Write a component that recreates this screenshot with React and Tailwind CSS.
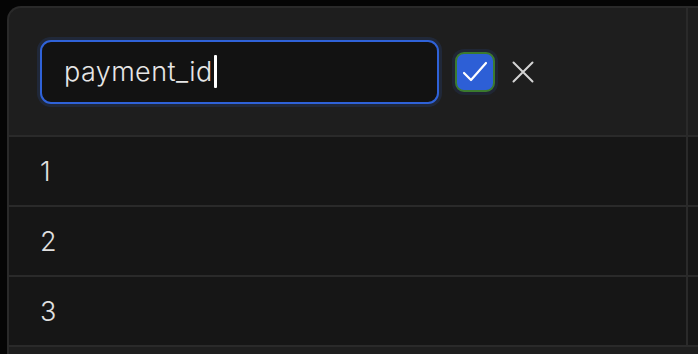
import React from 'react';

const rows = [1, 2, 3];

export default function App() {
  return (
    <div
      className="w-[698px] h-[354px] overflow-hidden bg-[#050505] pt-[6px] pl-[7px]"
      style={{ fontFamily: 'Inter, "Noto Sans", sans-serif' }}
    >
      <div className="h-full rounded-tl-[14px] border-l-2 border-t-2 border-[#2a2a2a] bg-[#1e1e1e] overflow-hidden">
        {/* Header */}
        <div className="flex h-[129px] border-b-2 border-[#2a2a2a]">
          <div className="w-[679px] shrink-0 border-r-2 border-[#2a2a2a] flex items-center pl-[31px]">
            <div className="w-[399px] h-[64px] rounded-[11px] border-2 border-[#2f62d8] bg-[#121212] shadow-[0_0_0_3px_rgba(47,98,216,0.15)] flex items-center pl-[22px]">
              <span className="text-[27px] leading-none font-light text-[#e6e6e6] tracking-[0.4px]">payment_id</span>
              <span className="ml-[1px] w-[3px] h-[33px] rounded-[1px] bg-white" />
            </div>
            <div className="ml-[16px] w-[40px] h-[40px] rounded-[9px] border-2 border-[#3b7a2e] bg-[#2d5fd6] flex items-center justify-center shadow-[0_0_0_3px_rgba(47,98,216,0.12)]">
              <svg width="28" height="28" viewBox="0 0 28 28" fill="none" stroke="#fff" strokeWidth="2.2" strokeLinecap="round" strokeLinejoin="round">
                <path d="M3 15l7 7L25 5" />
              </svg>
            </div>
            <div className="ml-[16px] w-[24px] h-[24px] flex items-center justify-center">
              <svg width="24" height="24" viewBox="0 0 24 24" fill="none" stroke="#d4d4d4" strokeWidth="2" strokeLinecap="round">
                <path d="M2.5 2.5l19 19M21.5 2.5l-19 19" />
              </svg>
            </div>
          </div>
          <div className="flex-1" />
        </div>

        {/* Rows */}
        {rows.map((n) => (
          <div key={n} className="flex h-[70px] bg-[#161616] border-b-2 border-[#2a2a2a]">
            <div className="w-[679px] shrink-0 border-r-2 border-[#2a2a2a] flex items-center pl-[31px]">
              <span className="text-[27px] leading-none font-light text-[#e0e0e0]">{n}</span>
            </div>
            <div className="flex-1" />
          </div>
        ))}
        <div className="h-[10px] bg-[#1e1e1e]" />
      </div>
    </div>
  );
}
